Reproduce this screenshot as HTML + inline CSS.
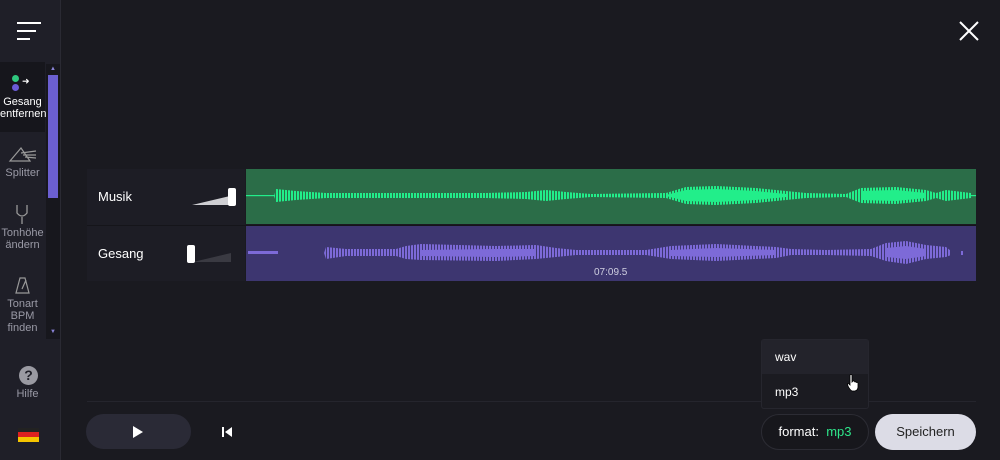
<!DOCTYPE html>
<html><head><meta charset="utf-8"><style>
*{margin:0;padding:0;box-sizing:border-box}
body{width:1000px;height:460px;background:#1a1a20;font-family:"Liberation Sans",sans-serif;position:relative;overflow:hidden;color:#fff}
.side{position:absolute;left:0;top:0;width:61px;height:460px;background:#1f1f28;border-right:1px solid #2a2a33}
.it{position:absolute;left:0;width:45px;text-align:center;font-size:11px;color:#9a9aa6;line-height:12px}
.abs{position:absolute}
</style></head><body>
<div class="side">
 <div class="abs" style="left:17px;top:22px;width:24px;height:2px;background:#fff"></div>
 <div class="abs" style="left:17px;top:30px;width:19px;height:2px;background:#fff"></div>
 <div class="abs" style="left:17px;top:38px;width:13px;height:2px;background:#fff"></div>
 <div class="abs" style="left:0;top:62px;width:45px;height:70px;background:#16161c"></div>
 <div class="abs" style="left:12px;top:75px;width:7px;height:7px;border-radius:50%;background:#2fc77e"></div>
 <div class="abs" style="left:12px;top:84px;width:7px;height:7px;border-radius:50%;background:#6a5bd6"></div>
 <div class="abs" style="left:22px;top:76px;font-size:9px;color:#fff">➜</div>
 <div class="it" style="top:96px;color:#fff;font-size:11px">Gesang<br>entfernen</div>
 <svg class="abs" style="left:8px;top:145px" width="30" height="18"><path d="M2 16 L13 3 L22 16 Z M13 8 L28 6 M15 10 L28 10 M17 12 L28 13" stroke="#999" fill="none" stroke-width="1.2"/></svg>
 <div class="it" style="top:167px">Splitter</div>
 <svg class="abs" style="left:14px;top:203px" width="16" height="22"><path d="M3 2 V10 Q8 16 13 10 V2 M8 14 V21" stroke="#999" fill="none" stroke-width="1.3"/></svg>
 <div class="it" style="top:227px">Tonhöhe<br>ändern</div>
 <svg class="abs" style="left:14px;top:276px" width="18" height="20"><path d="M6 2 H11 L15 17 H2 Z M8 13 L12 4" stroke="#999" fill="none" stroke-width="1.2"/></svg>
 <div class="it" style="top:298px">Tonart<br>BPM<br>finden</div>
 <div class="abs" style="left:46px;top:64px;width:14px;height:275px;background:#17171d"></div>
 <div class="abs" style="left:48px;top:75px;width:10px;height:123px;background:#6b5fd0"></div>
 <div class="abs" style="left:50px;top:66px;font-size:6px;color:#8a84d8">▲</div>
 <div class="abs" style="left:50px;top:329px;font-size:6px;color:#8a84d8">▼</div>
 <div class="abs" style="left:19px;top:366px;width:19px;height:19px;border-radius:50%;background:#9a9aa2;color:#1f1f28;font-weight:bold;font-size:14px;text-align:center;line-height:19px">?</div>
 <div class="it" style="top:388px;left:5px;width:45px">Hilfe</div>
 <div class="abs" style="left:18px;top:428px;width:21px;height:4px;background:#222"></div>
 <div class="abs" style="left:18px;top:432px;width:21px;height:5px;background:#dd2020"></div>
 <div class="abs" style="left:18px;top:437px;width:21px;height:5px;background:#f5c400"></div>
</div>
<svg class="abs" style="left:959px;top:21px" width="20" height="20"><path d="M1 1 L19 19 M19 1 L1 19" stroke="#fff" stroke-width="2"/></svg>

<div class="abs" style="left:87px;top:169px;width:158px;height:112px;background:#1d1d25"></div>
<div class="abs" style="left:87px;top:225px;width:889px;height:1px;background:#15151a"></div>
<div class="abs" style="left:98px;top:189px;font-size:13px">Musik</div>
<div class="abs" style="left:98px;top:246px;font-size:13px">Gesang</div>
<svg class="abs" style="left:190px;top:186px" width="50" height="22"><path d="M2 19 L40 10 L40 19 Z" fill="#cfcfd3"/><rect x="38" y="2" width="8" height="18" rx="2" fill="#fff"/></svg>
<svg class="abs" style="left:185px;top:243px" width="50" height="22"><path d="M8 19 L46 10 L46 19 Z" fill="#3a3a42"/><rect x="2" y="2" width="8" height="18" rx="2" fill="#fff"/></svg>

<svg class="abs" style="left:246px;top:169px" width="730" height="112">
 <defs>
  <pattern id="g" width="3" height="9" patternUnits="userSpaceOnUse"><rect width="3" height="9" fill="#2b6d48"/><rect x="0" y="0" width="2" height="9" fill="#22ee8a"/></pattern>
  <pattern id="p" width="3" height="9" patternUnits="userSpaceOnUse"><rect width="3" height="9" fill="#3d3670"/><rect x="0" y="0" width="2" height="9" fill="#7d6ad8"/></pattern>
 </defs>
 <rect x="0" y="0" width="730" height="55" fill="#2b6d48"/>
 <rect x="0" y="57" width="730" height="55" fill="#3d3670"/>
 <rect x="0" y="26" width="730" height="1.2" fill="#22ee8a"/>
 <path fill="url(#g)" d="M28 27 L30 20 L50 22 L80 24 L160 24 L240 24 L280 23 L300 21 L320 23 L345 25 L420 24 L440 18 L470 17 L510 19 L540 22 L560 24 L600 25 L615 19 L650 18 L680 21 L690 24 L700 21 L725 24 L725 29 L700 32 L690 29 L680 32 L650 35 L615 34 L600 28 L560 29 L540 31 L510 34 L470 36 L440 35 L420 29 L345 28 L320 30 L300 32 L280 30 L240 29 L160 29 L80 29 L50 31 L30 33 Z"/>
 <path fill="#22ee8a" d="M420 26 L440 21 L470 20 L510 22 L540 25 L540 28 L510 31 L470 33 L440 32 L420 27 Z M615 22 L650 21 L680 24 L680 29 L650 32 L615 31 Z"/>
 <rect x="2" y="82" width="30" height="3" fill="#7d6ad8"/>
 <path fill="url(#p)" d="M78 84 L80 78 L100 80 L150 80 L160 77 L175 75 L250 77 L290 76 L310 79 L330 81 L400 81 L425 77 L470 75 L530 78 L545 80 L580 81 L625 80 L640 74 L660 72 L680 76 L700 78 L705 82 L705 86 L700 88 L680 90 L660 95 L640 92 L625 87 L580 86 L545 86 L530 89 L470 92 L425 90 L400 86 L330 86 L310 88 L290 90 L250 92 L175 91 L160 90 L150 87 L100 87 L80 90 Z"/>
 <path fill="#7d6ad8" d="M175 81 L250 80 L290 80 L290 87 L250 88 L175 87 Z M425 81 L470 79 L530 81 L530 86 L470 88 L425 87 Z M640 79 L660 77 L680 80 L680 87 L660 90 L640 88 Z"/>
 <rect x="715" y="82" width="2" height="4" fill="#7d6ad8"/>
 <text x="348" y="106" font-size="10" fill="#cfcfe0" font-family="Liberation Sans">07:09.5</text>
</svg>

<div class="abs" style="left:87px;top:401px;width:889px;height:1px;background:#25252d"></div>
<div class="abs" style="left:86px;top:414px;width:105px;height:35px;border-radius:18px;background:#2a2a36"></div>
<svg class="abs" style="left:132px;top:425px" width="12" height="14"><path d="M1 1 L11 7 L1 13 Z" fill="#fff"/></svg>
<svg class="abs" style="left:221px;top:426px" width="12" height="12"><rect x="1" y="1" width="2" height="10" fill="#fff"/><path d="M11 1 L4 6 L11 11 Z" fill="#fff"/></svg>

<div class="abs" style="left:761px;top:339px;width:108px;height:70px;background:#1b1b21;border:1px solid #26262e;border-radius:3px"></div>
<div class="abs" style="left:762px;top:340px;width:106px;height:34px;background:#23232b"></div>
<div class="abs" style="left:775px;top:350px;font-size:12px">wav</div>
<div class="abs" style="left:775px;top:385px;font-size:12px">mp3</div>
<svg class="abs" style="left:846px;top:374px" width="14" height="18"><path d="M4 1.5 Q4 0.5 5 0.5 Q6 0.5 6 1.5 V8 L7 7 Q8 6.5 8.5 7.5 L9 8 Q10 7.5 10.5 8.5 Q11.5 8 12 9 V13 Q12 16 9 17 H6 Q4 16 2 12 L1.5 10 Q1.5 9 2.5 9.5 L4 11 Z" fill="#fff" stroke="#000" stroke-width="0.8"/></svg>

<div class="abs" style="left:761px;top:414px;width:108px;height:36px;border-radius:18px;border:1px solid #2c2c34;background:#17171c;font-size:13px;line-height:34px;text-align:center">format:&nbsp; <span style="color:#2ee58a">mp3</span></div>
<div class="abs" style="left:875px;top:414px;width:101px;height:36px;border-radius:18px;background:#dcdce6;color:#222;font-size:13px;line-height:36px;text-align:center">Speichern</div>
</body></html>
